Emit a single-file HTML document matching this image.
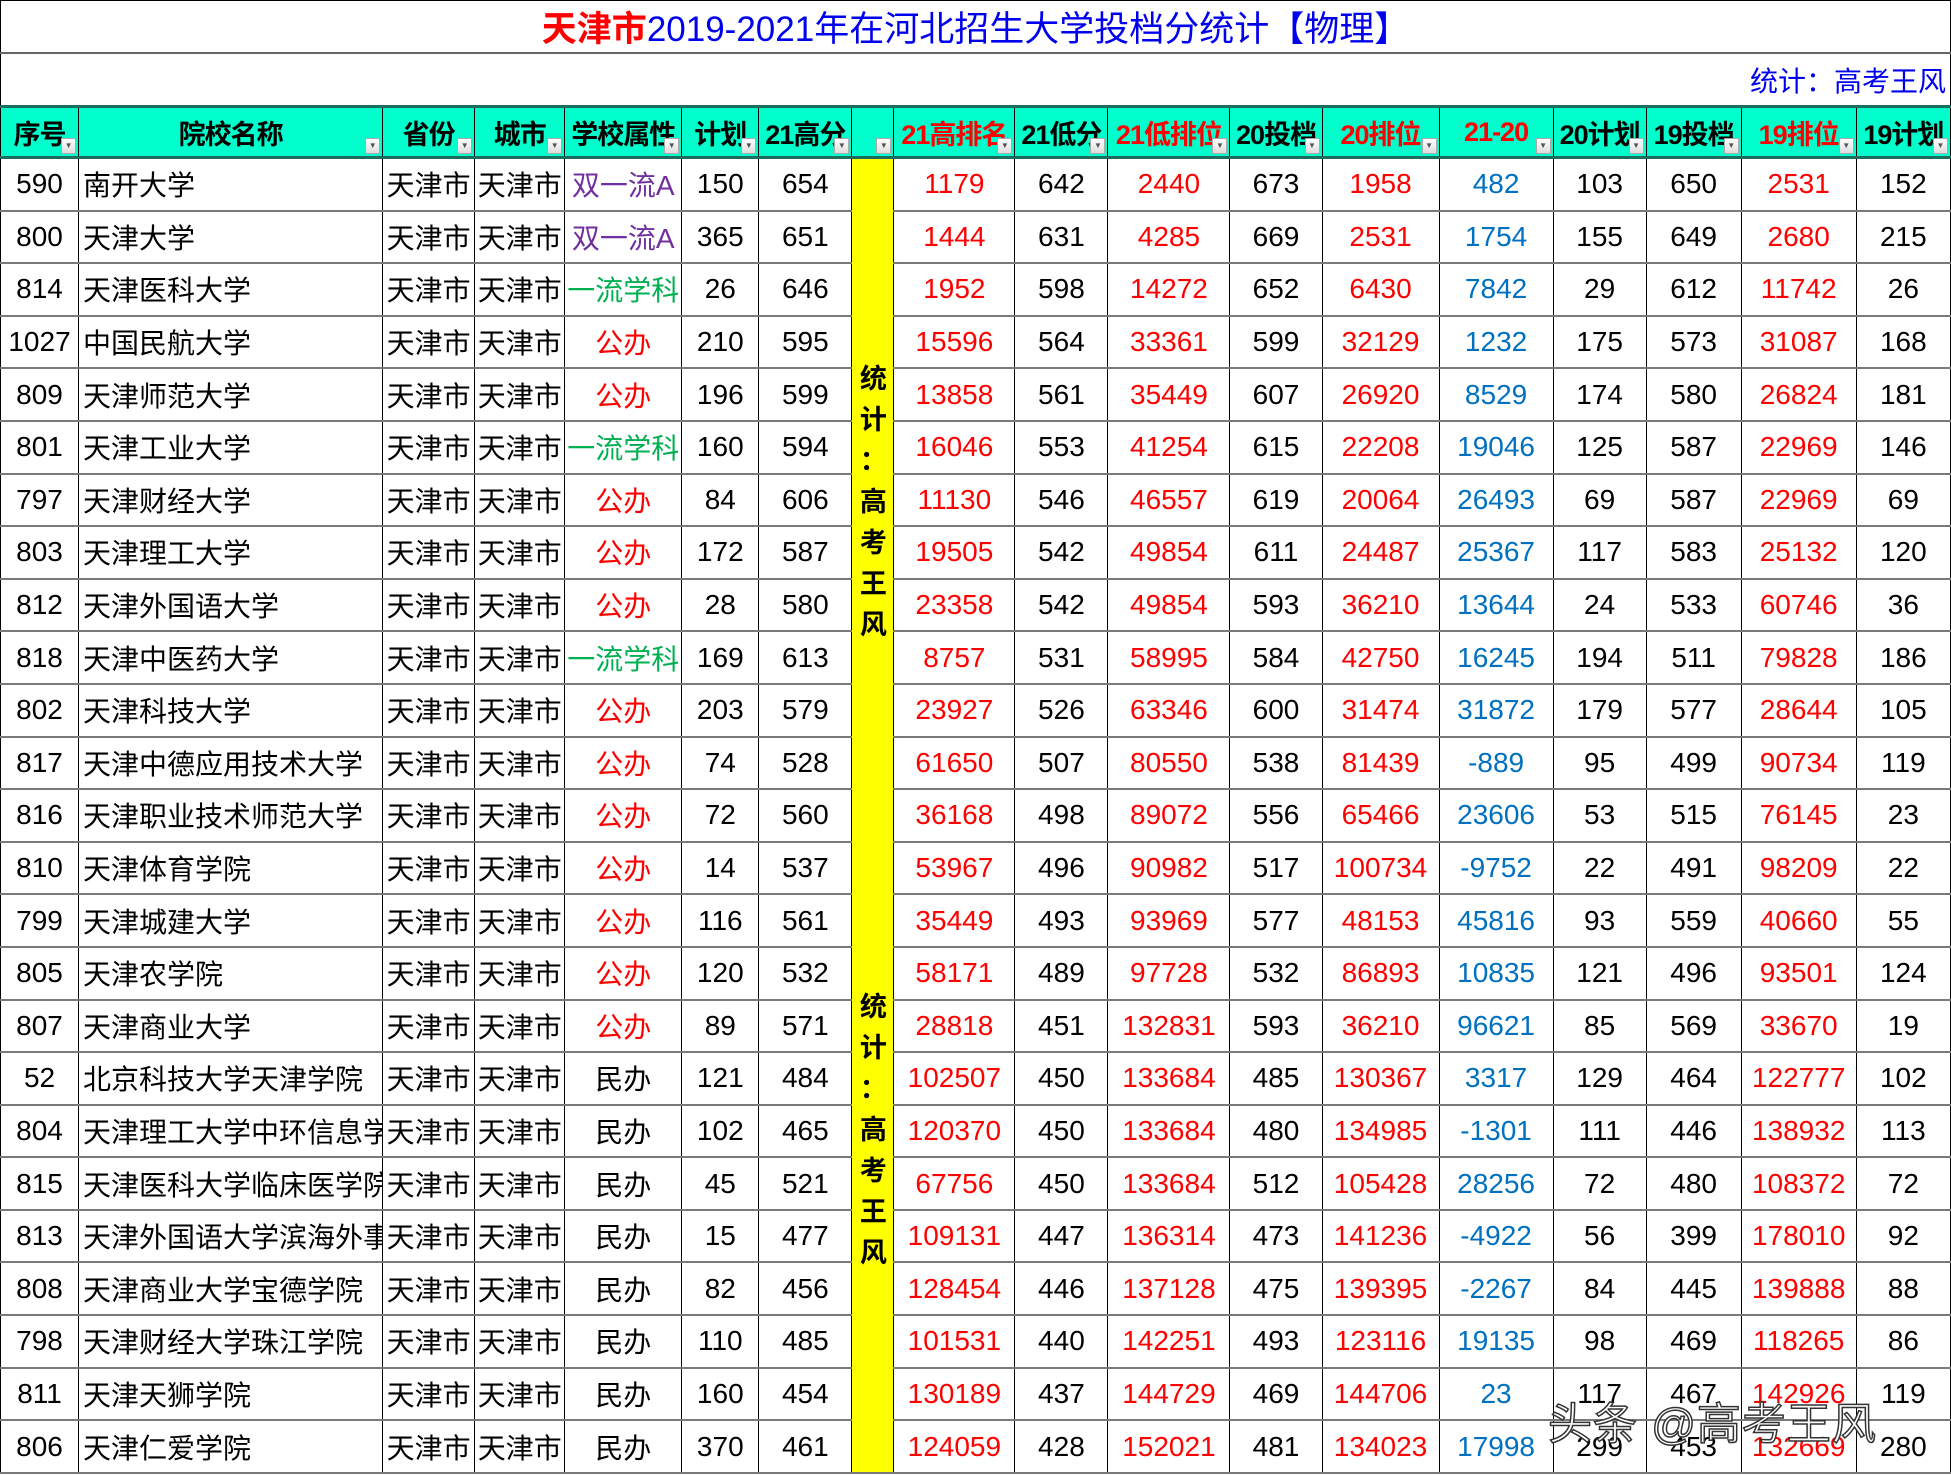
<!DOCTYPE html>
<html><head><meta charset="utf-8">
<style>
html,body{margin:0;padding:0;background:#fff;}
body{width:1951px;height:1476px;overflow:hidden;font-family:"Liberation Sans","Noto Sans CJK SC",sans-serif;}
table{border-collapse:collapse;table-layout:fixed;width:1951px;}
td{border:1px solid #000;padding:0;text-align:center;white-space:nowrap;overflow:hidden;font-size:28px;color:#000;position:relative;}
tr.d td{height:50.6px;border-bottom:2px solid #7a7a7a;}
tr.d td.n{text-align:left;padding-left:4px;}
.t1 td{height:51px;font-size:35px;color:#0000ee;border-bottom:2px solid #666;}
.t2 td{height:51px;font-size:28px;color:#0000ee;text-align:right;padding-right:4px;border-bottom:3px solid #1d6b5c;}
tr.h td{height:48px;background:#00ffcc;font-weight:bold;font-size:27px;border-bottom:3px solid #1d6b5c;letter-spacing:-1px;}
.r{color:#ff0000!important}.b{color:#0070c0}.p{color:#7030a0}.g{color:#00b050}
.f{position:absolute;right:2px;bottom:2px;width:13px;height:14px;border:1px solid #aaa;background:linear-gradient(#fff,#ddd);font-size:8px;line-height:14px;color:#555;text-align:center;font-weight:normal;letter-spacing:0}
td.y{background:#ffff00;vertical-align:top;}
.v{position:absolute;left:0;width:42px;text-align:center;font-weight:bold;font-size:27px;line-height:41px;white-space:normal;}
.wm{position:absolute;left:1548px;top:1388px;font-size:44px;color:#fff;-webkit-text-stroke:1.5px #333;letter-spacing:1px;}
</style></head><body>
<table>
<colgroup><col style="width:78px"><col style="width:304px"><col style="width:92px"><col style="width:90px"><col style="width:117px"><col style="width:77px"><col style="width:93px"><col style="width:42px"><col style="width:121px"><col style="width:93px"><col style="width:122px"><col style="width:92px"><col style="width:117px"><col style="width:114px"><col style="width:93px"><col style="width:95px"><col style="width:115px"><col style="width:94px"></colgroup>
<tr class="t1"><td colspan="18"><span style="color:#f00;font-weight:bold">天津市</span>2019-2021年在河北招生大学投档分统计【物理】</td></tr>
<tr class="t2"><td colspan="18">统计：高考王风</td></tr>
<tr class="h"><td>序号<i class="f">▼</i></td><td>院校名称<i class="f">▼</i></td><td>省份<i class="f">▼</i></td><td>城市<i class="f">▼</i></td><td>学校属性<i class="f">▼</i></td><td>计划<i class="f">▼</i></td><td>21高分<i class="f">▼</i></td><td><i class="f">▼</i></td><td class="r">21高排名<i class="f">▼</i></td><td>21低分<i class="f">▼</i></td><td class="r">21低排位<i class="f">▼</i></td><td>20投档<i class="f">▼</i></td><td class="r">20排位<i class="f">▼</i></td><td class="r">21-20<i class="f">▼</i></td><td>20计划<i class="f">▼</i></td><td>19投档<i class="f">▼</i></td><td class="r">19排位<i class="f">▼</i></td><td>19计划<i class="f">▼</i></td></tr>
<tr class="d"><td>590</td><td class="n">南开大学</td><td>天津市</td><td>天津市</td><td class="p">双一流A</td><td>150</td><td>654</td><td class="y" rowspan="25"><div class="v" style="top:200px">统<br>计<br>：<br>高<br>考<br>王<br>风</div><div class="v" style="top:828px">统<br>计<br>：<br>高<br>考<br>王<br>风</div></td><td class="r">1179</td><td>642</td><td class="r">2440</td><td>673</td><td class="r">1958</td><td class="b">482</td><td>103</td><td>650</td><td class="r">2531</td><td>152</td></tr>
<tr class="d"><td>800</td><td class="n">天津大学</td><td>天津市</td><td>天津市</td><td class="p">双一流A</td><td>365</td><td>651</td><td class="r">1444</td><td>631</td><td class="r">4285</td><td>669</td><td class="r">2531</td><td class="b">1754</td><td>155</td><td>649</td><td class="r">2680</td><td>215</td></tr>
<tr class="d"><td>814</td><td class="n">天津医科大学</td><td>天津市</td><td>天津市</td><td class="g">一流学科</td><td>26</td><td>646</td><td class="r">1952</td><td>598</td><td class="r">14272</td><td>652</td><td class="r">6430</td><td class="b">7842</td><td>29</td><td>612</td><td class="r">11742</td><td>26</td></tr>
<tr class="d"><td>1027</td><td class="n">中国民航大学</td><td>天津市</td><td>天津市</td><td class="r">公办</td><td>210</td><td>595</td><td class="r">15596</td><td>564</td><td class="r">33361</td><td>599</td><td class="r">32129</td><td class="b">1232</td><td>175</td><td>573</td><td class="r">31087</td><td>168</td></tr>
<tr class="d"><td>809</td><td class="n">天津师范大学</td><td>天津市</td><td>天津市</td><td class="r">公办</td><td>196</td><td>599</td><td class="r">13858</td><td>561</td><td class="r">35449</td><td>607</td><td class="r">26920</td><td class="b">8529</td><td>174</td><td>580</td><td class="r">26824</td><td>181</td></tr>
<tr class="d"><td>801</td><td class="n">天津工业大学</td><td>天津市</td><td>天津市</td><td class="g">一流学科</td><td>160</td><td>594</td><td class="r">16046</td><td>553</td><td class="r">41254</td><td>615</td><td class="r">22208</td><td class="b">19046</td><td>125</td><td>587</td><td class="r">22969</td><td>146</td></tr>
<tr class="d"><td>797</td><td class="n">天津财经大学</td><td>天津市</td><td>天津市</td><td class="r">公办</td><td>84</td><td>606</td><td class="r">11130</td><td>546</td><td class="r">46557</td><td>619</td><td class="r">20064</td><td class="b">26493</td><td>69</td><td>587</td><td class="r">22969</td><td>69</td></tr>
<tr class="d"><td>803</td><td class="n">天津理工大学</td><td>天津市</td><td>天津市</td><td class="r">公办</td><td>172</td><td>587</td><td class="r">19505</td><td>542</td><td class="r">49854</td><td>611</td><td class="r">24487</td><td class="b">25367</td><td>117</td><td>583</td><td class="r">25132</td><td>120</td></tr>
<tr class="d"><td>812</td><td class="n">天津外国语大学</td><td>天津市</td><td>天津市</td><td class="r">公办</td><td>28</td><td>580</td><td class="r">23358</td><td>542</td><td class="r">49854</td><td>593</td><td class="r">36210</td><td class="b">13644</td><td>24</td><td>533</td><td class="r">60746</td><td>36</td></tr>
<tr class="d"><td>818</td><td class="n">天津中医药大学</td><td>天津市</td><td>天津市</td><td class="g">一流学科</td><td>169</td><td>613</td><td class="r">8757</td><td>531</td><td class="r">58995</td><td>584</td><td class="r">42750</td><td class="b">16245</td><td>194</td><td>511</td><td class="r">79828</td><td>186</td></tr>
<tr class="d"><td>802</td><td class="n">天津科技大学</td><td>天津市</td><td>天津市</td><td class="r">公办</td><td>203</td><td>579</td><td class="r">23927</td><td>526</td><td class="r">63346</td><td>600</td><td class="r">31474</td><td class="b">31872</td><td>179</td><td>577</td><td class="r">28644</td><td>105</td></tr>
<tr class="d"><td>817</td><td class="n">天津中德应用技术大学</td><td>天津市</td><td>天津市</td><td class="r">公办</td><td>74</td><td>528</td><td class="r">61650</td><td>507</td><td class="r">80550</td><td>538</td><td class="r">81439</td><td class="b">-889</td><td>95</td><td>499</td><td class="r">90734</td><td>119</td></tr>
<tr class="d"><td>816</td><td class="n">天津职业技术师范大学</td><td>天津市</td><td>天津市</td><td class="r">公办</td><td>72</td><td>560</td><td class="r">36168</td><td>498</td><td class="r">89072</td><td>556</td><td class="r">65466</td><td class="b">23606</td><td>53</td><td>515</td><td class="r">76145</td><td>23</td></tr>
<tr class="d"><td>810</td><td class="n">天津体育学院</td><td>天津市</td><td>天津市</td><td class="r">公办</td><td>14</td><td>537</td><td class="r">53967</td><td>496</td><td class="r">90982</td><td>517</td><td class="r">100734</td><td class="b">-9752</td><td>22</td><td>491</td><td class="r">98209</td><td>22</td></tr>
<tr class="d"><td>799</td><td class="n">天津城建大学</td><td>天津市</td><td>天津市</td><td class="r">公办</td><td>116</td><td>561</td><td class="r">35449</td><td>493</td><td class="r">93969</td><td>577</td><td class="r">48153</td><td class="b">45816</td><td>93</td><td>559</td><td class="r">40660</td><td>55</td></tr>
<tr class="d"><td>805</td><td class="n">天津农学院</td><td>天津市</td><td>天津市</td><td class="r">公办</td><td>120</td><td>532</td><td class="r">58171</td><td>489</td><td class="r">97728</td><td>532</td><td class="r">86893</td><td class="b">10835</td><td>121</td><td>496</td><td class="r">93501</td><td>124</td></tr>
<tr class="d"><td>807</td><td class="n">天津商业大学</td><td>天津市</td><td>天津市</td><td class="r">公办</td><td>89</td><td>571</td><td class="r">28818</td><td>451</td><td class="r">132831</td><td>593</td><td class="r">36210</td><td class="b">96621</td><td>85</td><td>569</td><td class="r">33670</td><td>19</td></tr>
<tr class="d"><td>52</td><td class="n">北京科技大学天津学院</td><td>天津市</td><td>天津市</td><td>民办</td><td>121</td><td>484</td><td class="r">102507</td><td>450</td><td class="r">133684</td><td>485</td><td class="r">130367</td><td class="b">3317</td><td>129</td><td>464</td><td class="r">122777</td><td>102</td></tr>
<tr class="d"><td>804</td><td class="n">天津理工大学中环信息学院</td><td>天津市</td><td>天津市</td><td>民办</td><td>102</td><td>465</td><td class="r">120370</td><td>450</td><td class="r">133684</td><td>480</td><td class="r">134985</td><td class="b">-1301</td><td>111</td><td>446</td><td class="r">138932</td><td>113</td></tr>
<tr class="d"><td>815</td><td class="n">天津医科大学临床医学院</td><td>天津市</td><td>天津市</td><td>民办</td><td>45</td><td>521</td><td class="r">67756</td><td>450</td><td class="r">133684</td><td>512</td><td class="r">105428</td><td class="b">28256</td><td>72</td><td>480</td><td class="r">108372</td><td>72</td></tr>
<tr class="d"><td>813</td><td class="n">天津外国语大学滨海外事学院</td><td>天津市</td><td>天津市</td><td>民办</td><td>15</td><td>477</td><td class="r">109131</td><td>447</td><td class="r">136314</td><td>473</td><td class="r">141236</td><td class="b">-4922</td><td>56</td><td>399</td><td class="r">178010</td><td>92</td></tr>
<tr class="d"><td>808</td><td class="n">天津商业大学宝德学院</td><td>天津市</td><td>天津市</td><td>民办</td><td>82</td><td>456</td><td class="r">128454</td><td>446</td><td class="r">137128</td><td>475</td><td class="r">139395</td><td class="b">-2267</td><td>84</td><td>445</td><td class="r">139888</td><td>88</td></tr>
<tr class="d"><td>798</td><td class="n">天津财经大学珠江学院</td><td>天津市</td><td>天津市</td><td>民办</td><td>110</td><td>485</td><td class="r">101531</td><td>440</td><td class="r">142251</td><td>493</td><td class="r">123116</td><td class="b">19135</td><td>98</td><td>469</td><td class="r">118265</td><td>86</td></tr>
<tr class="d"><td>811</td><td class="n">天津天狮学院</td><td>天津市</td><td>天津市</td><td>民办</td><td>160</td><td>454</td><td class="r">130189</td><td>437</td><td class="r">144729</td><td>469</td><td class="r">144706</td><td class="b">23</td><td>117</td><td>467</td><td class="r">142926</td><td>119</td></tr>
<tr class="d"><td>806</td><td class="n">天津仁爱学院</td><td>天津市</td><td>天津市</td><td>民办</td><td>370</td><td>461</td><td class="r">124059</td><td>428</td><td class="r">152021</td><td>481</td><td class="r">134023</td><td class="b">17998</td><td>299</td><td>453</td><td class="r">132669</td><td>280</td></tr>
</table>
<div class="wm">头条 @高考王风</div>
</body></html>
